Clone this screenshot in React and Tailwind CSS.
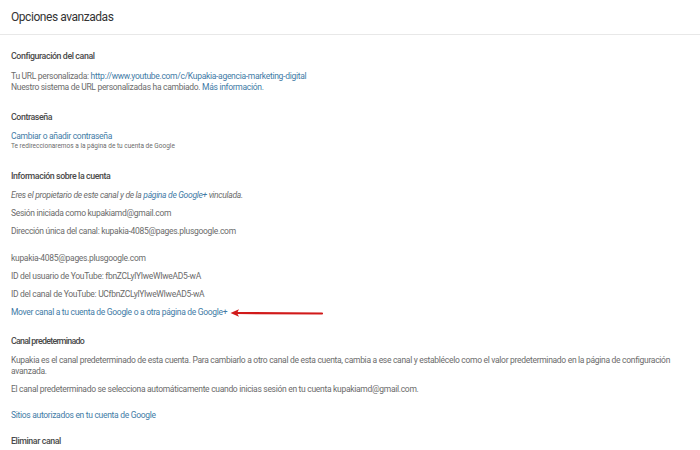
export default function App() {
  const link = "text-[#3f7ba6]";
  const h = "text-[8.8px] leading-[12px] font-medium text-[#4a4a4a] tracking-[-0.4px]";
  return (
    <div className="w-[700px] h-[450px] overflow-hidden bg-white text-[#6b6b6b] text-[8.5px] leading-[11px] tracking-[-0.3px]" style={{ fontFamily: "Roboto, 'Noto Sans', sans-serif" }}>
      <div className="h-[35px] border-b border-[#e8e8e8] pl-[11px] pt-[10px] text-[12px] leading-[15px] text-[#333] tracking-[-0.45px]">Opciones avanzadas</div>
      <div className="pl-[11px] pr-[20px]">
        <div className={"mt-[15px] " + h}>Configuración del canal</div>
        <div className="mt-[9px]">Tu URL personalizada: <span className={link}>http://www.youtube.com/c/Kupakia-agencia-marketing-digital</span></div>
        <div>Nuestro sistema de URL personalizadas ha cambiado. <span className={link}>Más información.</span></div>

        <div className={"mt-[18px] " + h}>Contraseña</div>
        <div className={"mt-[8px] " + link}>Cambiar o añadir contraseña</div>
        <div className="text-[6.5px] leading-[8px] tracking-normal">Te redireccionaremos a la página de tu cuenta de Google</div>

        <div className={"mt-[20px] " + h}>Información sobre la cuenta</div>
        <div className="mt-[8px] italic">Eres el propietario de este canal y de la <span className={link}>página de Google+</span> vinculada.</div>
        <div className="mt-[7px]">Sesión iniciada como kupakiamd@gmail.com</div>
        <div className="mt-[7px]">Dirección única del canal: kupakia-4085@pages.plusgoogle.com</div>
        <div className="mt-[16px]">kupakia-4085@pages.plusgoogle.com</div>
        <div className="mt-[7px]">ID del usuario de YouTube: fbnZCLylYIweWIweAD5-wA</div>
        <div className="mt-[7px]">ID del canal de YouTube: UCfbnZCLylYIweWIweAD5-wA</div>
        <div className="mt-[7px] flex items-center">
          <span className={link}>Mover canal a tu cuenta de Google o a otra página de Google+</span>
          <svg width="94" height="10" viewBox="0 0 94 10" className="ml-[3px]">
            <line x1="6" y1="5" x2="92" y2="5.5" stroke="#d11a1a" strokeWidth="2.2" strokeLinecap="round" />
            <path d="M0.5 5 L9 1.2 L7 5 L9 8.8 Z" fill="#d11a1a" />
          </svg>
        </div>

        <div className={"mt-[17px] " + h + " tracking-[-0.7px]"}>Canal predeterminado</div>
        <div className="mt-[8px] pr-[8px]">Kupakia es el canal predeterminado de esta cuenta. Para cambiarlo a otro canal de esta cuenta, cambia a ese canal y establécelo como el valor predeterminado en la página de configuración avanzada.</div>
        <div className="mt-[7px]">El canal predeterminado se selecciona automáticamente cuando inicias sesión en tu cuenta kupakiamd@gmail.com.</div>
        <div className={"mt-[15px] " + link}>Sitios autorizados en tu cuenta de Google</div>
        <div className={"mt-[14px] " + h}>Eliminar canal</div>
      </div>
    </div>
  );
}
